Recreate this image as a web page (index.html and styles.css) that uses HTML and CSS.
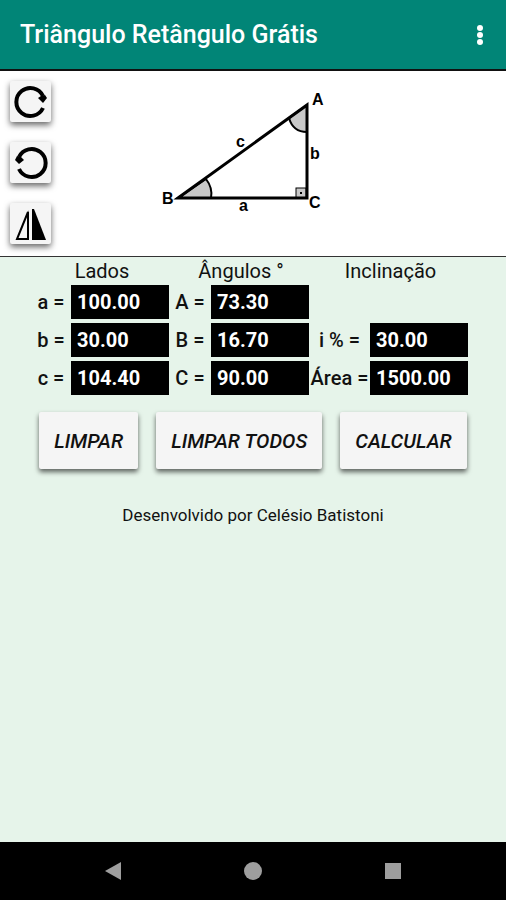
FILE: index.html
```html
<!DOCTYPE html>
<html lang="pt-BR">
<head>
    <meta charset="UTF-8">
    <meta name="viewport" content="width=device-width, initial-scale=1.0">
    <title>Triângulo Retângulo Grátis</title>
    <link rel="stylesheet" href="styles.css">
</head>
<body>
    <header class="app-bar">
        <h1>Triângulo Retângulo Grátis</h1>
        <button class="menu-btn" type="button" aria-label="Menu">
            <svg width="8" height="22" viewBox="0 0 8 22" fill="#fff">
                <circle cx="4" cy="4" r="3"/>
                <circle cx="4" cy="11" r="3"/>
                <circle cx="4" cy="18" r="3"/>
            </svg>
        </button>
    </header>

    <section class="drawing">
        <div class="tools">
            <button class="tool-btn" type="button" aria-label="Girar à direita">
                <svg width="41" height="41" viewBox="0 0 41 41">
                    <path d="M33 27 A14 14 0 1 1 33 15" fill="none" stroke="#000" stroke-width="4"/>
                    <path d="M28 17 L31 15 L35 14 L37 17 L33 22 Z"/>
                </svg>
            </button>
            <button class="tool-btn" type="button" aria-label="Girar à esquerda">
                <svg width="41" height="41" viewBox="0 0 41 41">
                    <path d="M9 27 A14 14 0 1 0 9 15" fill="none" stroke="#000" stroke-width="4"/>
                    <path d="M14 18 L11 15 L7 14 L5 18 L9 22 Z"/>
                </svg>
            </button>
            <button class="tool-btn" type="button" aria-label="Espelhar">
                <svg width="41" height="41" viewBox="0 0 41 41">
                    <path d="M18 9 V36 H7 Z" fill="none" stroke="#000" stroke-width="2"/>
                    <path d="M17 15 L19 7 V36 H17 Z"/>
                    <path d="M22 6 L24 6 L36 37 H22 Z"/>
                </svg>
            </button>
        </div>
        <svg class="triangle" width="170" height="130" viewBox="0 0 170 130">
            <path d="M17 111 L45 92 Q52 101 50 111 Z" fill="#c8c8c8" stroke="#000" stroke-width="2"/>
            <path d="M146 18 L128 31 Q132 45 146 45 Z" fill="#c8c8c8" stroke="#000" stroke-width="2"/>
            <rect x="135" y="101" width="10" height="10" fill="#c8c8c8" stroke="#000"/>
            <rect x="139" y="105" width="2" height="2"/>
            <path d="M17 111 L146 18 V111 Z" fill="none" stroke="#000" stroke-width="3"/>
            <text x="151" y="18">A</text>
            <text x="1" y="117">B</text>
            <text x="148" y="121">C</text>
            <text x="78" y="124">a</text>
            <text x="149" y="72">b</text>
            <text x="75" y="60">c</text>
        </svg>
    </section>

    <main>
        <form class="calc">
            <div class="fields">
                <h2>Lados</h2>
                <h2>Ângulos °</h2>
                <h2>Inclinação</h2>

                <label for="ladoA">a =</label>
                <input id="ladoA" type="text" value="100.00">
                <label for="anguloA">A =</label>
                <input id="anguloA" type="text" value="73.30">

                <label class="new-row" for="ladoB">b =</label>
                <input id="ladoB" type="text" value="30.00">
                <label for="anguloB">B =</label>
                <input id="anguloB" type="text" value="16.70">
                <label for="inclinacao">i % =</label>
                <input id="inclinacao" type="text" value="30.00">

                <label for="ladoC">c =</label>
                <input id="ladoC" type="text" value="104.40">
                <label for="anguloC">C =</label>
                <input id="anguloC" type="text" value="90.00">
                <label for="area">Área =</label>
                <input id="area" type="text" value="1500.00">
            </div>

            <div class="actions">
                <button type="button">LIMPAR</button>
                <button type="button">LIMPAR TODOS</button>
                <button type="button">CALCULAR</button>
            </div>
        </form>
        <p class="credit">Desenvolvido por Celésio Batistoni</p>
    </main>

    <nav class="nav-bar">
        <button type="button" aria-label="Voltar">
            <svg width="18" height="18" viewBox="0 0 18 18"><path d="M1 9 L17 0 V18 Z"/></svg>
        </button>
        <button type="button" aria-label="Início">
            <svg width="18" height="18" viewBox="0 0 18 18"><circle cx="9" cy="9" r="9"/></svg>
        </button>
        <button type="button" aria-label="Recentes">
            <svg width="18" height="18" viewBox="0 0 18 18"><rect x="1" y="1" width="16" height="16"/></svg>
        </button>
    </nav>
</body>
</html>
```

FILE: styles.css
```css
* {
    box-sizing: border-box;
}

body {
    margin: 0;
    min-height: 100vh;
    display: flex;
    flex-direction: column;
    font-family: Roboto, sans-serif;
    color: #111;
    background: #e6f4ea;
}

button {
    padding: 0;
    border: none;
    font-family: inherit;
    cursor: pointer;
}

svg {
    display: block;
}

/* Barra superior */
.app-bar {
    display: flex;
    align-items: center;
    justify-content: space-between;
    height: 71px;
    padding: 0 22px 0 20px;
    background: #018577;
    border-bottom: 2px solid #111;
}

.app-bar h1 {
    margin: 0;
    color: white;
    font-size: 25px;
    font-weight: 500;
}

.menu-btn {
    background: none;
}

/* Desenho do triângulo */
.drawing {
    display: grid;
    grid-template-columns: 1fr auto 1fr;
    padding: 10px 10px 12px;
    background: white;
    border-bottom: 1px solid #333;
}

.tools {
    display: flex;
    flex-direction: column;
    align-items: flex-start;
    gap: 20px;
}

.tool-btn {
    background: #f5f5f5;
    border-radius: 2px;
    box-shadow: 0 3px 6px rgba(0, 0, 0, 0.6);
}

.triangle {
    margin: 6px 14px 0 0;
    font-family: "Liberation Sans", Arial, sans-serif;
    font-size: 16px;
    font-weight: bold;
}

main {
    flex: 1;
}

/* Campos */
.fields {
    display: grid;
    grid-template-columns: 40px 98px 42px 98px 61px 98px;
    justify-content: center;
    align-items: center;
    row-gap: 4px;
    padding-right: 7px;
}

.fields h2 {
    grid-column: span 2;
    margin: 0;
    padding: 4px 0 0 4px;
    font-size: 20px;
    font-weight: 400;
    line-height: 20px;
    text-align: center;
}

.fields label {
    font-size: 20px;
    font-weight: 500;
    text-align: center;
    white-space: nowrap;
}

.fields .new-row {
    grid-column: 1;
}

.fields input {
    width: 100%;
    height: 34px;
    padding: 0 6px;
    border: none;
    background: black;
    color: white;
    font-family: inherit;
    font-size: 20px;
    font-weight: 700;
}

/* Botões */
.actions {
    display: flex;
    justify-content: center;
    gap: 18px;
    margin-top: 17px;
}

.actions button {
    height: 57px;
    padding: 0 15px;
    background: #f5f5f5;
    border-radius: 2px;
    box-shadow: 0 3px 5px rgba(0, 0, 0, 0.6);
    color: #111;
    font-size: 20px;
    font-style: italic;
    font-weight: 500;
}

.credit {
    margin: 34px 0 0;
    font-size: 17px;
    line-height: 24px;
    text-align: center;
}

/* Barra de navegação */
.nav-bar {
    display: flex;
    align-items: center;
    justify-content: center;
    gap: 122px;
    height: 58px;
    background: black;
}

.nav-bar button {
    background: none;
    fill: #9e9e9e;
}
```
